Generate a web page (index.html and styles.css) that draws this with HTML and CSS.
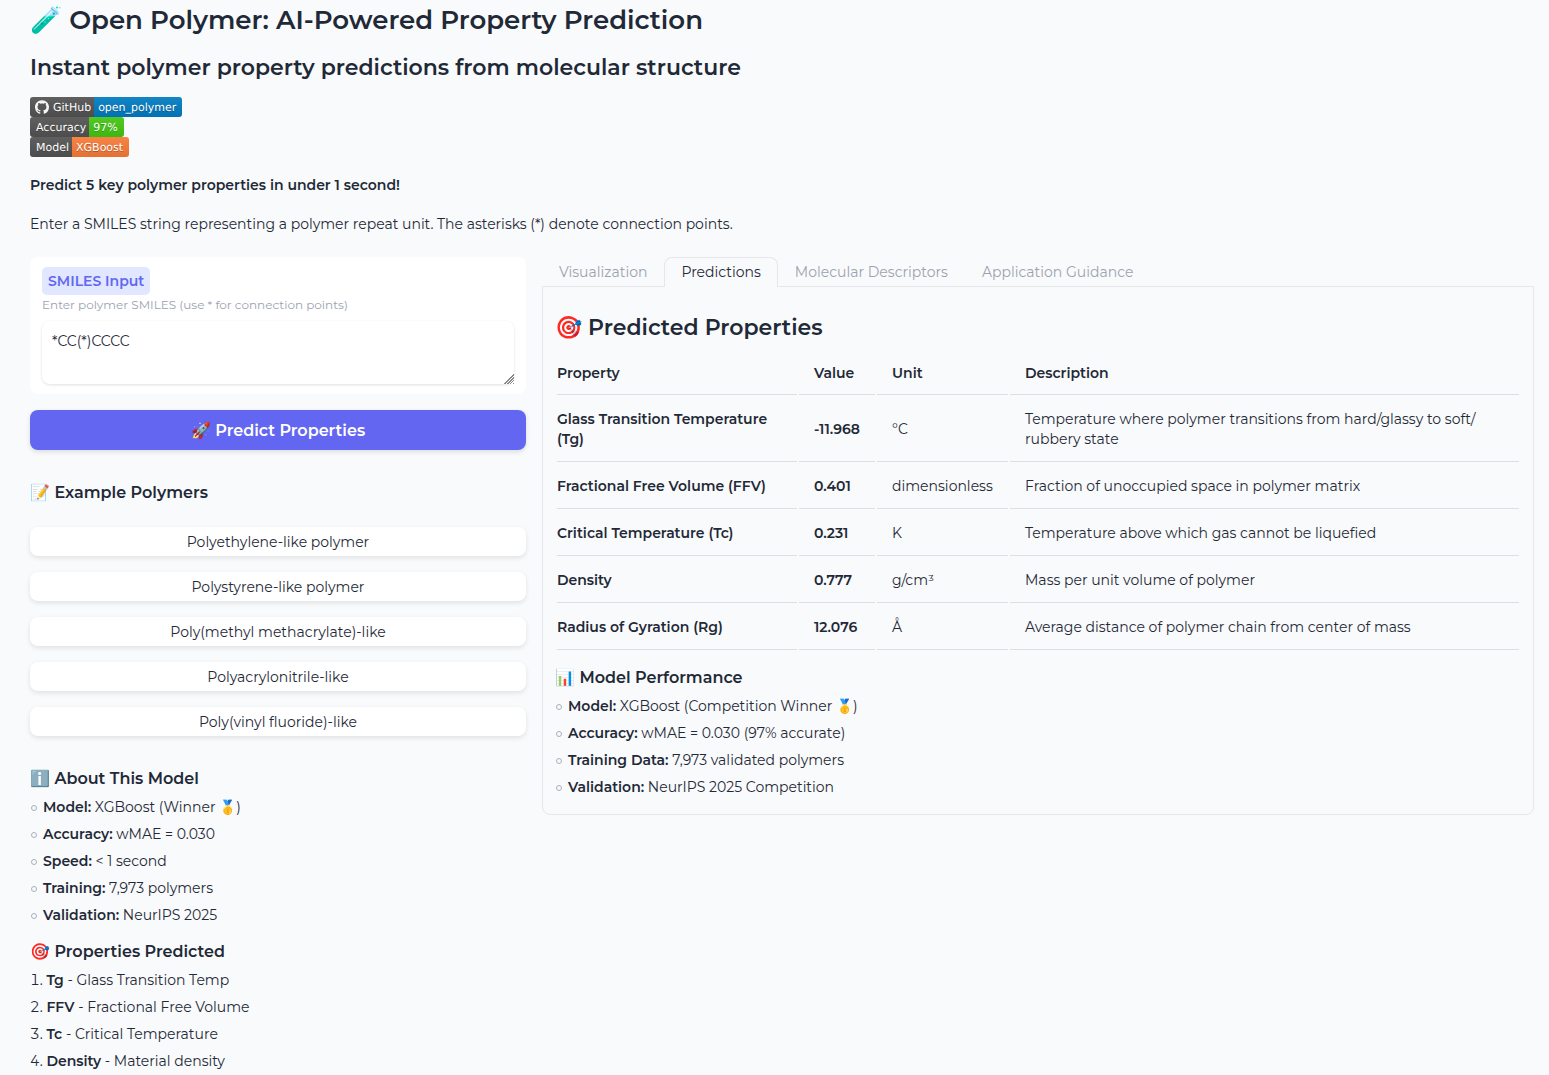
FILE: index.html
```html
<!DOCTYPE html>
<html lang="en">
<head>
<meta charset="utf-8">
<meta name="viewport" content="width=device-width, initial-scale=1">
<title>Open Polymer</title>
<link rel="stylesheet" href="styles.css">
</head>
<body>
<main class="page">
  <header class="intro">
    <h1>🧪 Open Polymer: AI-Powered Property Prediction</h1>
    <h2>Instant polymer property predictions from molecular structure</h2>
    <div class="badges">
      <a class="badge" href="#github"><span class="badge-key"><svg class="badge-logo" viewBox="0 0 24 24" aria-hidden="true"><path fill="whitesmoke" d="M12 .297c-6.63 0-12 5.373-12 12 0 5.303 3.438 9.8 8.205 11.385.6.113.82-.258.82-.577 0-.285-.01-1.04-.015-2.04-3.338.724-4.042-1.61-4.042-1.61C4.422 18.07 3.633 17.7 3.633 17.7c-1.087-.744.084-.729.084-.729 1.205.084 1.838 1.236 1.838 1.236 1.07 1.835 2.809 1.305 3.495.998.108-.776.417-1.305.76-1.605-2.665-.3-5.466-1.332-5.466-5.93 0-1.31.465-2.38 1.235-3.22-.135-.303-.54-1.523.105-3.176 0 0 1.005-.322 3.3 1.23.96-.267 1.98-.399 3-.405 1.02.006 2.04.138 3 .405 2.28-1.552 3.285-1.23 3.285-1.23.645 1.653.24 2.873.12 3.176.765.84 1.23 1.91 1.23 3.22 0 4.61-2.805 5.625-5.475 5.92.42.36.81 1.096.81 2.22 0 1.606-.015 2.896-.015 3.286 0 .315.21.69.825.57C20.565 22.092 24 17.592 24 12.297c0-6.627-5.373-12-12-12"/></svg>GitHub</span><span class="badge-value blue">open_polymer</span></a>
      <span class="badge"><span class="badge-key">Accuracy</span><span class="badge-value green">97%</span></span>
      <span class="badge"><span class="badge-key">Model</span><span class="badge-value orange">XGBoost</span></span>
    </div>
    <p><strong>Predict 5 key polymer properties in under 1 second!</strong></p>
    <p>Enter a SMILES string representing a polymer repeat unit. The asterisks (*) denote connection points.</p>
  </header>

  <div class="columns">
    <section class="side">
      <div class="field">
        <label for="smiles">SMILES Input</label>
        <div class="hint" id="smiles-hint">Enter polymer SMILES (use * for connection points)</div>
        <textarea id="smiles" aria-describedby="smiles-hint" spellcheck="false">*CC(*)CCCC</textarea>
      </div>
      <button class="primary" type="button">🚀 Predict Properties</button>
      <h3 class="examples-title">📝 Example Polymers</h3>
      <div class="examples">
        <button type="button">Polyethylene-like polymer</button>
        <button type="button">Polystyrene-like polymer</button>
        <button type="button">Poly(methyl methacrylate)-like</button>
        <button type="button">Polyacrylonitrile-like</button>
        <button type="button">Poly(vinyl fluoride)-like</button>
      </div>
      <h3 class="about-title">ℹ️ About This Model</h3>
      <ul>
        <li><strong>Model:</strong> XGBoost (Winner 🥇)</li>
        <li><strong>Accuracy:</strong> wMAE = 0.030</li>
        <li><strong>Speed:</strong> &lt; 1 second</li>
        <li><strong>Training:</strong> 7,973 polymers</li>
        <li><strong>Validation:</strong> NeurIPS 2025</li>
      </ul>
      <h3>🎯 Properties Predicted</h3>
      <ol>
        <li><strong>Tg</strong> - Glass Transition Temp</li>
        <li><strong>FFV</strong> - Fractional Free Volume</li>
        <li><strong>Tc</strong> - Critical Temperature</li>
        <li><strong>Density</strong> - Material density</li>
      </ol>
    </section>

    <section class="results">
      <div class="tabs" role="tablist">
        <button type="button" role="tab" aria-selected="false">Visualization</button>
        <button type="button" role="tab" aria-selected="true">Predictions</button>
        <button type="button" role="tab" aria-selected="false">Molecular Descriptors</button>
        <button type="button" role="tab" aria-selected="false">Application Guidance</button>
      </div>
      <div class="panel" role="tabpanel">
        <h2>🎯 Predicted Properties</h2>
        <table>
          <colgroup><col class="col-property"><col class="col-value"><col class="col-unit"><col></colgroup>
          <thead>
            <tr><th>Property</th><th>Value</th><th>Unit</th><th>Description</th></tr>
          </thead>
          <tbody>
            <tr><td><strong>Glass Transition Temperature (Tg)</strong></td><td><strong>-11.968</strong></td><td>°C</td><td>Temperature where polymer transitions from hard/glassy to soft/<wbr>rubbery state</td></tr>
            <tr><td><strong>Fractional Free Volume (FFV)</strong></td><td><strong>0.401</strong></td><td>dimensionless</td><td>Fraction of unoccupied space in polymer matrix</td></tr>
            <tr><td><strong>Critical Temperature (Tc)</strong></td><td><strong>0.231</strong></td><td>K</td><td>Temperature above which gas cannot be liquefied</td></tr>
            <tr><td><strong>Density</strong></td><td><strong>0.777</strong></td><td>g/cm³</td><td>Mass per unit volume of polymer</td></tr>
            <tr><td><strong>Radius of Gyration (Rg)</strong></td><td><strong>12.076</strong></td><td>Å</td><td>Average distance of polymer chain from center of mass</td></tr>
          </tbody>
        </table>
        <h3>📊 Model Performance</h3>
        <ul>
          <li><strong>Model:</strong> XGBoost (Competition Winner 🥇)</li>
          <li><strong>Accuracy:</strong> wMAE = 0.030 (97% accurate)</li>
          <li><strong>Training Data:</strong> 7,973 validated polymers</li>
          <li><strong>Validation:</strong> NeurIPS 2025 Competition</li>
        </ul>
      </div>
    </section>
  </div>
</main>
</body>
</html>
```
FILE: styles.css
```css
* { box-sizing: border-box; }
body {
  margin: 0;
  background: #f9fafb;
  color: #1f2937;
  font: 400 14px/20px Montserrat, Inter, sans-serif;
}
.page { padding: 0 15px 0 30px; }
h1, h2, h3, p, ul, ol { margin: 0; }
h1, h2, h3, strong, th { font-weight: 600; }
h1 { font-size: 26px; line-height: 40px; }
h2 { font-size: 22px; line-height: 30px; }
h3 { font-size: 16px; line-height: 24px; }
button, textarea { font: inherit; color: inherit; }

.intro h2 { margin-top: 13px; }
.intro p { margin-top: 19px; }
.badges { display: flex; flex-direction: column; align-items: flex-start; margin-top: 14px; }
.badges + p { margin-top: 18px; }
.badge {
  display: flex;
  border-radius: 3px;
  overflow: hidden;
  color: #fff;
  font: 11px/20px "DejaVu Sans", sans-serif;
  text-rendering: geometricPrecision;
  text-decoration: none;
  text-shadow: 0 1px 0 rgba(1, 1, 1, .3);
}
.badge-key, .badge-value {
  display: flex;
  align-items: flex-start;
  height: 20px;
  background-image: linear-gradient(rgba(187, 187, 187, .1), rgba(0, 0, 0, .1));
}
.badge-key { background-color: #555; padding: 1px 3px 0 6px; }
.badge-value { padding: 1px 6px 0 4px; }
.badge-logo { width: 14px; height: 14px; margin: 2px 4px 0 -1px; }
.blue { background-color: #007ec6; }
.green { background-color: #4c1; }
.orange { background-color: #fe7d37; }

.columns { display: grid; grid-template-columns: 1fr 2fr; gap: 16px; margin-top: 23px; align-items: start; }
.side, .results { min-width: 0; }
.field { background: #fff; border-radius: 8px; padding: 10px 12px; }
.field label {
  display: inline-block;
  padding: 4px 6px;
  border-radius: 5px;
  background: #e0e7ff;
  color: #6366f1;
  font-weight: 600;
}
.hint { color: #9ca3af; font-size: 12px; line-height: 20px; }
.field textarea {
  display: block;
  width: 100%;
  height: 63px;
  margin-top: 6px;
  padding: 10px;
  border: 0;
  border-radius: 8px;
  background: #fff;
  box-shadow: 0 1px 3px rgba(0, 0, 0, .12);
  resize: vertical;
}
.field textarea::-webkit-resizer {
  background:
    linear-gradient(135deg, #fff 62%, transparent 62%),
    repeating-linear-gradient(135deg, #888 0 1px, #fff 1px 2px);
}
.primary {
  display: block;
  width: 100%;
  height: 40px;
  margin-top: 16px;
  padding: 1px 0 0;
  border: 0;
  border-radius: 8px;
  background: #6366f1;
  color: #fff;
  font-size: 16px;
  font-weight: 600;
  box-shadow: 0 2px 5px rgba(0, 0, 0, .12);
}
.examples-title { margin-top: 31px; }
.examples { display: flex; flex-direction: column; gap: 16px; margin-top: 22px; }
.examples button {
  height: 29px;
  padding: 0;
  border: 0;
  border-radius: 8px;
  background: #fff;
  box-shadow: 0 2px 5px rgba(0, 0, 0, .1);
}
.about-title { margin-top: 31px; }
ul, ol { padding: 0; margin: 3px 0 11px; }
ul { list-style: none; }
li { line-height: 27px; }
ul li { display: flex; align-items: center; white-space: pre; }
ul li::before {
  content: "";
  box-sizing: border-box;
  width: 6px;
  height: 6px;
  margin: 0 6px 0 1px;
  border: 1px solid #a9b1bd;
  border-radius: 50%;
}
ol { list-style-position: inside; }

.tabs { display: flex; }
.tabs button {
  height: 30px;
  margin-bottom: -1px;
  padding: 0 16px 1px;
  border: 1px solid transparent;
  border-bottom: 0;
  border-radius: 8px 8px 0 0;
  background: transparent;
  color: #9ca3af;
}
.tabs button[aria-selected="true"] {
  position: relative;
  background: #f9fafb;
  border-color: #e5e7eb;
  color: #1f2937;
}
.panel { border: 1px solid #e5e7eb; border-radius: 0 0 8px 8px; padding: 26px 12px 2px; }
table { width: 100%; margin: 6px 0 16px; border-spacing: 2px 0; table-layout: fixed; }
.col-property { width: 240px; }
.col-value { width: 76px; }
.col-unit { width: 131px; }
th, td { padding: 14px 14px 12px 15px; border-bottom: 1px solid #dcdfe4; text-align: left; }
th { padding-bottom: 11px; }
th:first-child, td:first-child { padding-left: 0; }
```
